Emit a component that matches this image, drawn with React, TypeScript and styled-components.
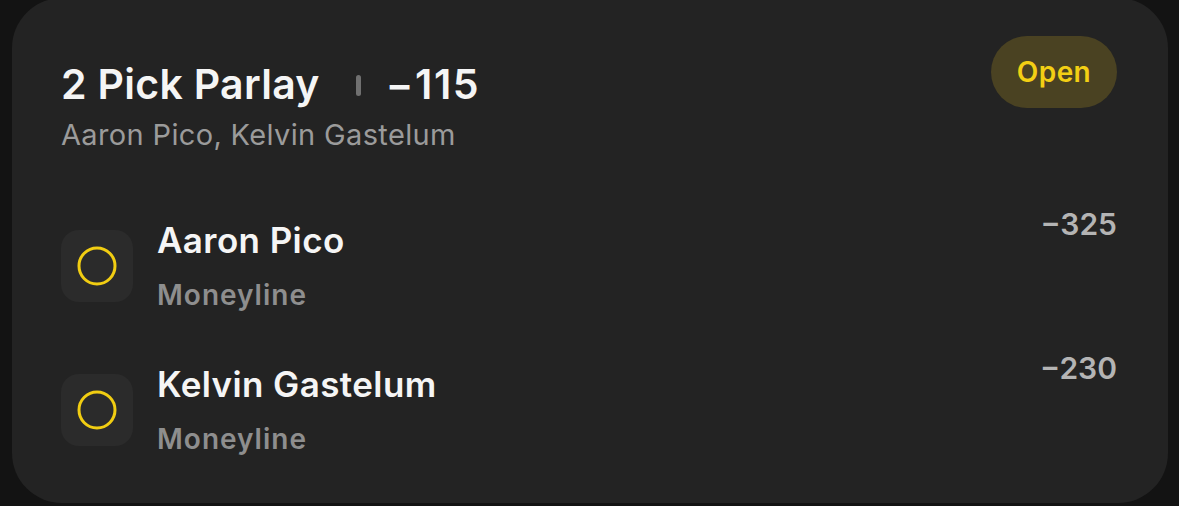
import React from "react";
import styled, { createGlobalStyle } from "styled-components";

const GlobalStyle = createGlobalStyle`
  html, body {
    margin: 0;
    padding: 0;
    background: #131313;
  }
  body {
    font-family: Inter, "Noto Sans", sans-serif;
    -webkit-font-smoothing: antialiased;
  }
`;

type Leg = { name: string; market: string; odds: string };

const legs: Leg[] = [
  { name: "Aaron Pico", market: "Moneyline", odds: "\u2212325" },
  { name: "Kelvin Gastelum", market: "Moneyline", odds: "\u2212230" },
];

const App = () => {
  return (
    <>
      <GlobalStyle />
      <Card>
        <Header>
          <HeaderText>
            <TitleRow>
              <Title>2 Pick Parlay</Title>
              <Divider />
              <TitleOdds>{"\u2212115"}</TitleOdds>
            </TitleRow>
            <Subtitle>Aaron Pico, Kelvin Gastelum</Subtitle>
          </HeaderText>
          <Badge>Open</Badge>
        </Header>
        <Legs>
          {legs.map((leg) => (
            <LegRow key={leg.name}>
              <IconBox>
                <svg width="40" height="40" viewBox="0 0 40 40">
                  <circle
                    cx="20"
                    cy="20"
                    r="18"
                    fill="none"
                    stroke="#f1cd12"
                    strokeWidth="3"
                  />
                </svg>
              </IconBox>
              <LegInfo>
                <LegName>{leg.name}</LegName>
                <LegMarket>{leg.market}</LegMarket>
              </LegInfo>
              <LegOdds>{leg.odds}</LegOdds>
            </LegRow>
          ))}
        </Legs>
      </Card>
    </>
  );
};

export default App;

const Card = styled.div`
  box-sizing: border-box;
  margin: -2px 0 0 12px;
  width: 1156px;
  height: 505px;
  background: #232323;
  border-radius: 50px;
  padding: 38px 51px 0 49px;
  display: flex;
  flex-direction: column;
`;

const Header = styled.div`
  display: flex;
  justify-content: space-between;
  align-items: flex-start;
`;

const HeaderText = styled.div`
  margin-top: 23px;
  display: flex;
  flex-direction: column;
  gap: 9px;
`;

const TitleRow = styled.div`
  display: flex;
  align-items: center;
`;

const Title = styled.span`
  font-size: 41px;
  line-height: 50px;
  font-weight: 600;
  color: #f5f5f5;
  letter-spacing: 0.3px;
`;

const TitleOdds = styled(Title)`
  letter-spacing: 1.6px;
`;

const Divider = styled.span`
  display: block;
  flex-shrink: 0;
  width: 5px;
  height: 21px;
  border-radius: 3px;
  background: #707070;
  margin: 2px 25px 0 36px;
`;

const Subtitle = styled.span`
  font-size: 29px;
  line-height: 34px;
  font-weight: 400;
  color: #9b9b9b;
  letter-spacing: 0.35px;
`;

const Badge = styled.div`
  width: 126px;
  height: 72px;
  border-radius: 36px;
  background: #4a4222;
  color: #f3cf14;
  font-size: 28px;
  font-weight: 600;
  letter-spacing: 0.4px;
  display: flex;
  align-items: center;
  justify-content: center;
`;

const Legs = styled.div`
  margin-top: 54px;
  display: flex;
  flex-direction: column;
  gap: 39px;
`;

const LegRow = styled.div`
  display: flex;
  align-items: flex-start;
`;

const IconBox = styled.div`
  margin-top: 24px;
  width: 72px;
  height: 72px;
  flex-shrink: 0;
  border-radius: 18px;
  background: #2b2b2b;
  display: flex;
  align-items: center;
  justify-content: center;
`;

const LegInfo = styled.div`
  margin: 13px 0 0 24px;
  flex: 1;
  display: flex;
  flex-direction: column;
  gap: 18px;
`;

const LegName = styled.span`
  font-size: 35px;
  line-height: 42px;
  font-weight: 600;
  color: #f5f5f5;
  letter-spacing: 0.4px;
`;

const LegMarket = styled.span`
  font-size: 28px;
  line-height: 32px;
  font-weight: 600;
  color: #8e8e8e;
  letter-spacing: 1px;
`;

const LegOdds = styled.span`
  font-size: 30px;
  line-height: 36px;
  font-weight: 600;
  color: #b4b4b4;
`;
